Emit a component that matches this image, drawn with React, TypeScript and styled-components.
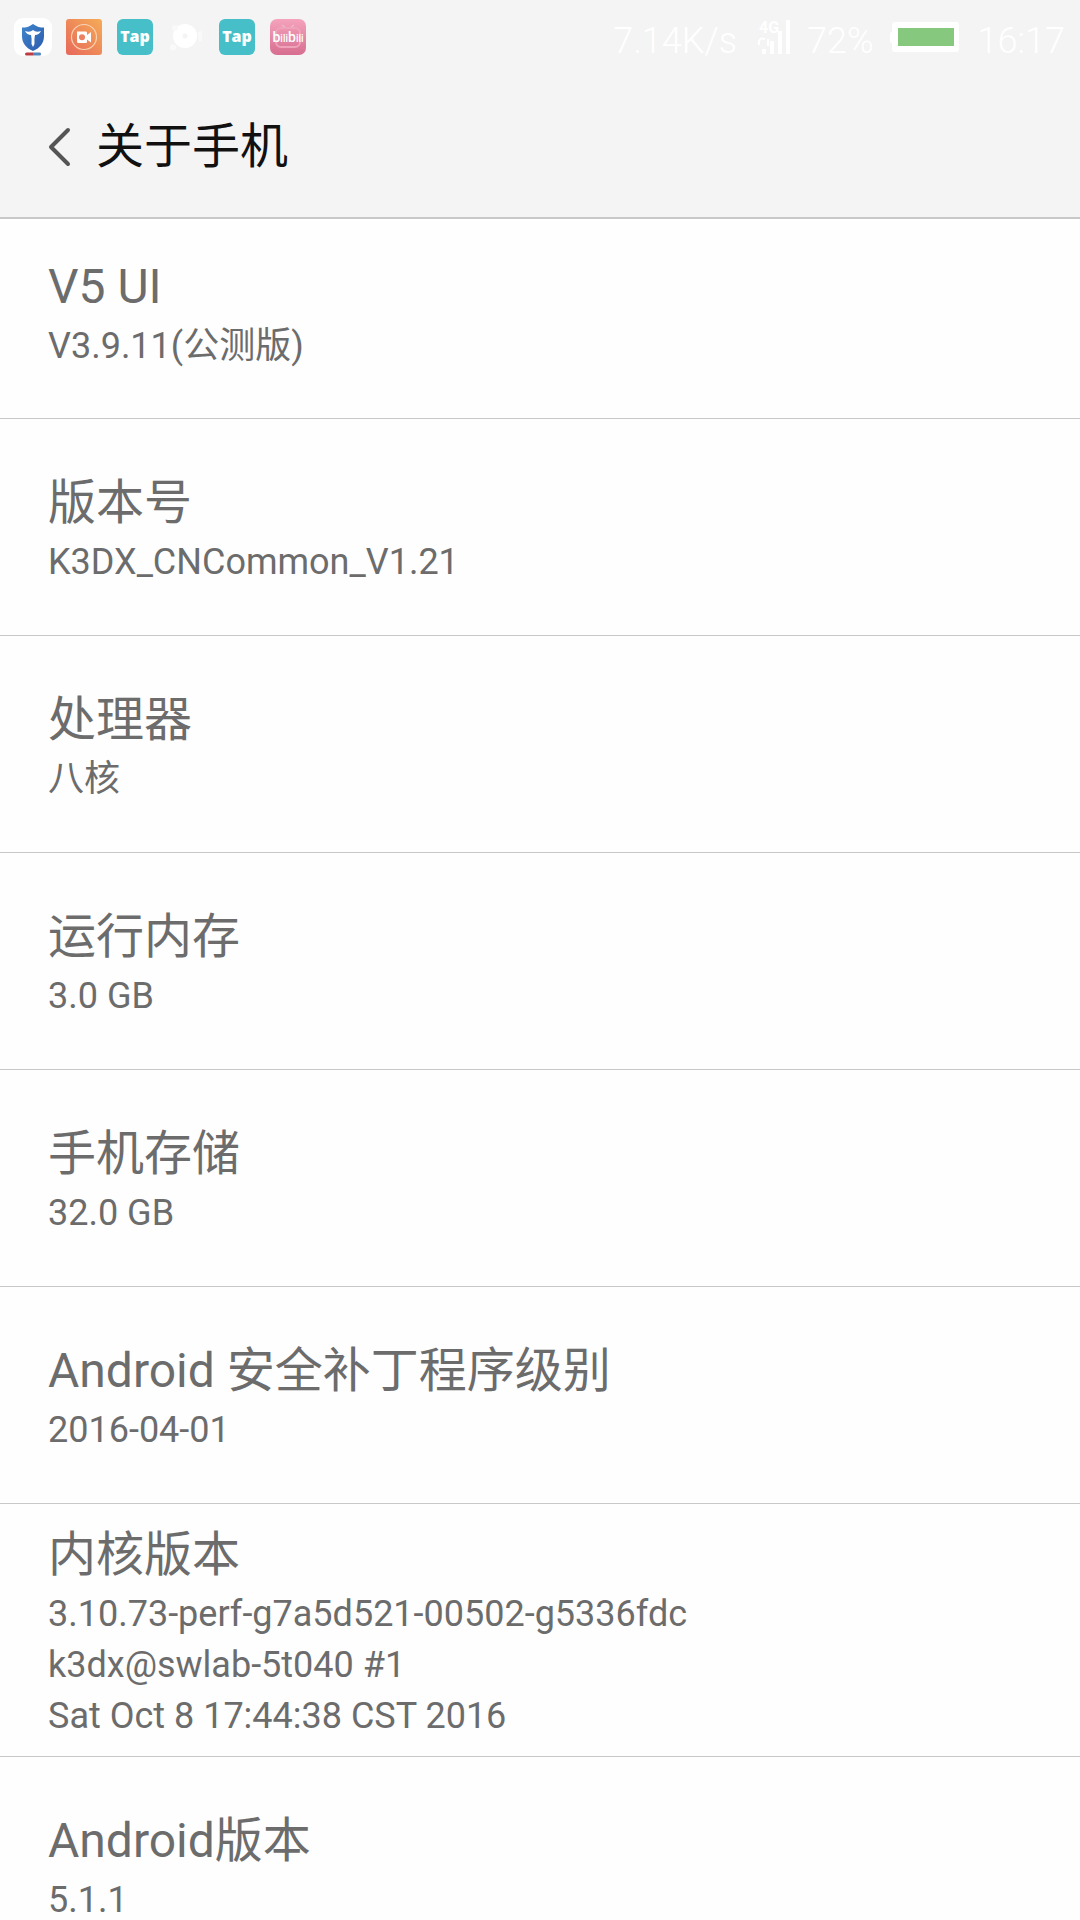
import React from "react";
import styled, { createGlobalStyle } from "styled-components";

const GlobalStyle = createGlobalStyle`
  *, *::before, *::after { box-sizing: border-box; }
  body {
    margin: 0;
    background: #fefefe;
    font-family: Roboto, "Noto Sans CJK SC", sans-serif;
  }
`;

const Screen = styled.div`
  display: flex;
  flex-direction: column;
  height: 100vh;
  overflow: hidden;
`;

const TopArea = styled.header`
  flex: none;
  background: #f4f4f4;
  border-bottom: 2px solid #c8c8c8;
`;

const StatusBar = styled.div`
  display: flex;
  align-items: center;
  justify-content: space-between;
  height: 73px;
  padding: 0 15px;
`;

const Notifications = styled.div`
  display: flex;
  gap: 15px;
`;

const AppIcon = styled.svg`
  display: block;
  width: 36px;
  height: 36px;
  overflow: visible;
`;

const SystemInfo = styled.div`
  display: flex;
  align-items: center;
  gap: 16px;
  color: #ffffff;
`;

const StatusText = styled.span`
  padding-top: 8px;
  font-size: 36px;
  font-weight: 300;
  line-height: 42px;
  white-space: nowrap;
`;

const SignalIcon = styled.svg`
  display: block;
  width: 38px;
  height: 36px;
  overflow: visible;
`;

const BatteryIcon = styled.svg`
  display: block;
  width: 72px;
  height: 30px;
`;

const TitleBar = styled.div`
  display: flex;
  align-items: center;
  height: 144px;
  padding: 4px 48px 0;
`;

const BackButton = styled.button`
  display: flex;
  padding: 0;
  margin-right: 24px;
  border: 0;
  background: none;
  cursor: pointer;
`;

const PageTitle = styled.h1`
  margin: 0;
  color: #111111;
  font-size: 48px;
  font-weight: 400;
  line-height: 68px;
`;

const List = styled.dl`
  flex: 1;
  min-height: 0;
  margin: 0;
  overflow-y: auto;
  scrollbar-width: none;
`;

type Spacing = "first" | "regular" | "dense";

const rowPadding: Record<Spacing, string> = {
  first: "34px 48px 46px",
  regular: "50px 48px 47px",
  dense: "17px 48px 14px",
};

const Row = styled.div<{ $spacing: Spacing }>`
  padding: ${({ $spacing }) => rowPadding[$spacing]};
  border-bottom: 1px solid #c8c8c8;
  color: #6c6c6c;
`;

const RowTitle = styled.dt`
  font-size: 48px;
  line-height: 68px;
`;

const RowValue = styled.dd`
  margin: 0;
  font-size: 36px;
  line-height: 51px;
  white-space: pre-line;
`;

const items: { title: string; value: string; spacing?: Spacing }[] = [
  { title: "V5 UI", value: "V3.9.11(公测版)", spacing: "first" },
  { title: "版本号", value: "K3DX_CNCommon_V1.21" },
  { title: "处理器", value: "八核" },
  { title: "运行内存", value: "3.0 GB" },
  { title: "手机存储", value: "32.0 GB" },
  { title: "Android 安全补丁程序级别", value: "2016-04-01" },
  {
    title: "内核版本",
    value:
      "3.10.73-perf-g7a5d521-00502-g5336fdc\nk3dx@swlab-5t040 #1\nSat Oct 8 17:44:38 CST 2016",
    spacing: "dense",
  },
  { title: "Android版本", value: "5.1.1" },
];

const ShieldApp = () => (
  <AppIcon viewBox="0 0 36 36" aria-hidden="true">
    <defs>
      <linearGradient id="shield" x1="0" y1="0" x2="1" y2="1">
        <stop offset="0" stopColor="#3f86cc" />
        <stop offset="1" stopColor="#2d5cae" />
      </linearGradient>
    </defs>
    <rect x="-1" y="-1" width="38" height="38" rx="9" fill="#fff" />
    <path d="M18 5 C14 8 11 8.500 7 8.500 V17 C7 24 11 29 18 32 C25 29 29 24 29 17 V8.500 C25 8.500 22 8 18 5Z" fill="url(#shield)" />
    <path d="M10 12 Q15 14 18 11 Q21 14 26 12 Q24 16 20 16 Q19 20 19.500 25 L18 28 L16.500 25 Q17 20 16 16 Q12 16 10 12Z" fill="#fff" />
    <path d="M11.500 33.500H18V36.500H11.500Q10 36.500 10 35T11.500 33.500Z" fill="#bd3b42" />
    <path d="M18 33.500H25Q26 33.500 26 35T25 36.500H18Z" fill="#5187bd" />
  </AppIcon>
);

const RecorderApp = () => (
  <AppIcon viewBox="0 0 36 36" aria-hidden="true">
    <defs>
      <linearGradient id="recorder" x1="1" y1="0" x2="0" y2="1">
        <stop offset="0" stopColor="#f5ac57" />
        <stop offset="1" stopColor="#e7685a" />
      </linearGradient>
    </defs>
    <rect width="36" height="36" rx="3" fill="url(#recorder)" />
    <circle cx="18" cy="18" r="12.500" fill="none" stroke="#fbd3b4" strokeWidth="1.200" />
    <path d="M11 12.500H20Q21 12.500 21 14V16L25 13V23.500L21 20.500V22.500Q21 24 20 24H12.500Q11 24 11 22.500Z" fill="#fff" />
    <circle cx="16" cy="18.300" r="3" fill="#ec8060" />
  </AppIcon>
);

const TapApp = () => (
  <AppIcon viewBox="0 0 36 36" aria-hidden="true">
    <rect width="36" height="36" rx="6" fill="#47bfc8" />
    <text x="18" y="23" textAnchor="middle" fill="#fff" fontFamily="Open Sans, sans-serif" fontWeight="800" fontSize="16">
      Tap
    </text>
  </AppIcon>
);

const DiscApp = () => (
  <AppIcon viewBox="0 0 36 36" aria-hidden="true" fill="#fff">
    <circle cx="17" cy="17" r="12" />
    <circle cx="17" cy="17" r="2.500" fill="#f4f4f4" />
    <circle cx="5" cy="28.500" r="3" fill="#fafafa" />
    <circle cx="7" cy="9" r="3" fill="#fafafa" />
    <path d="M30 13L34 12V22L31 23Z" fill="#f9f9f9" />
  </AppIcon>
);

const BilibiliApp = () => (
  <AppIcon viewBox="0 0 36 36" aria-hidden="true">
    <defs>
      <linearGradient id="bili" x1="0" y1="0" x2="0" y2="1">
        <stop offset="0" stopColor="#f5a3bd" />
        <stop offset="1" stopColor="#d76e8f" />
      </linearGradient>
    </defs>
    <rect width="36" height="36" rx="7" fill="url(#bili)" />
    <path d="M12 6L16 9M24 6L20 9" stroke="#f4b6c9" strokeWidth="1.500" />
    <rect x="6" y="9" width="24" height="19" rx="5" fill="none" stroke="#efa3ba" strokeWidth="2" />
    <text x="18" y="23" textAnchor="middle" fill="#fff" fontFamily="Roboto, sans-serif" fontWeight="500" fontSize="10">
      <tspan fontSize="14">b</tspan>ili<tspan fontSize="14">b</tspan>ili
    </text>
  </AppIcon>
);

export default function App() {
  return (
    <Screen>
      <GlobalStyle />
      <TopArea>
        <StatusBar>
          <Notifications>
            <ShieldApp />
            <RecorderApp />
            <TapApp />
            <DiscApp />
            <TapApp />
            <BilibiliApp />
          </Notifications>
          <SystemInfo>
            <StatusText>7.14K/s</StatusText>
            <SignalIcon viewBox="1 0 38 36" fill="#fff" aria-label="4G">
              <text x="7" y="14" fontFamily="Roboto, sans-serif" fontWeight="700" fontSize="16">
                4G
              </text>
              <path d="M34 1H38V35H34ZM26 12H30V35H26ZM18 22H22V35H18ZM10 30H14V35H10Z" />
              <path d="M7 26Q6 18 13 20M16 20V27" fill="none" stroke="#fff" strokeWidth="2" />
            </SignalIcon>
            <StatusText>72%</StatusText>
            <BatteryIcon viewBox="2 0 72 30" aria-hidden="true">
              <rect x="2" y="10" width="4" height="11" rx="2" fill="#fff" />
              <rect x="4" y="0" width="67" height="30" rx="3" fill="#fff" />
              <rect x="10" y="6" width="56" height="18" fill="#85c87e" />
            </BatteryIcon>
            <StatusText>16:17</StatusText>
          </SystemInfo>
        </StatusBar>
        <TitleBar>
          <BackButton type="button" aria-label="返回">
            <svg width="24" height="40" viewBox="0 0 24 40" fill="none" aria-hidden="true">
              <path d="M20 3L3 20L20 37" stroke="#555" strokeWidth="4" strokeLinecap="round" strokeLinejoin="round" />
            </svg>
          </BackButton>
          <PageTitle>关于手机</PageTitle>
        </TitleBar>
      </TopArea>
      <List>
        {items.map((item) => (
          <Row key={item.title} $spacing={item.spacing ?? "regular"}>
            <RowTitle>{item.title}</RowTitle>
            <RowValue>{item.value}</RowValue>
          </Row>
        ))}
      </List>
    </Screen>
  );
}
